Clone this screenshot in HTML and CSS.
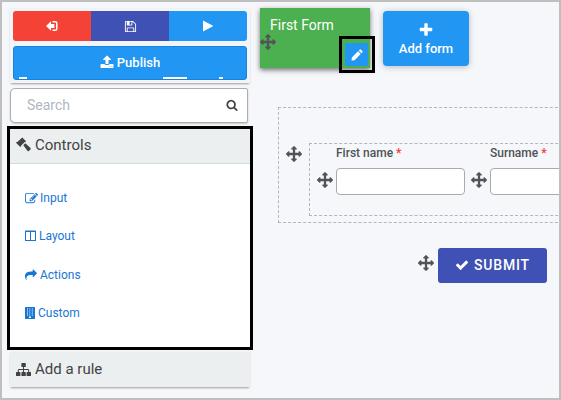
FILE: index.html
```
<!DOCTYPE html>
<html lang="en">
<head>
<meta charset="utf-8">
<title>Form editor</title>
<link rel="stylesheet" href="styles.css">
</head>
<body>
<svg class="defs" aria-hidden="true">
  <symbol id="move" viewBox="0 0 1792 1792"><path d="M1792 896q0 26-19 45l-256 256q-19 19-45 19t-45-19-19-45v-128h-384v384h128q26 0 45 19t19 45-19 45l-256 256q-19 19-45 19t-45-19l-256-256q-19-19-19-45t19-45 45-19h128v-384h-384v128q0 26-19 45t-45 19-45-19l-256-256q-19-19-19-45t19-45l256-256q19-19 45-19t45 19 19 45v128h384v-384h-128q-26 0-45-19t-19-45 19-45l256-256q19-19 45-19t45 19l256 256q19 19 19 45t-19 45-45 19h-128v384h384v-128q0-26 19-45t45-19 45 19l256 256q19 19 19 45z"/></symbol>
</svg>
<div class="frame">
  <aside class="sidebar">
    <div class="toolbar">
      <div class="actions">
        <button class="btn exit"><svg class="i12" viewBox="0 0 12 12"><path d="M0 6 5 1.200v2.800h3.400v4H5v2.800z"/><path d="M6.500 1.800h2.800q1.500 0 1.500 1.500v5.400q0 1.500-1.500 1.500H6.500" fill="none" stroke="currentColor" stroke-width="1.500"/></svg></button>
        <button class="btn save"><svg class="i13" viewBox="0 0 1792 1792"><path d="M512 1536h768v-384h-768v384zm896 0h128v-896q0-14-10-38.500t-20-34.500l-281-281q-10-10-34-20t-39-10v416q0 40-28 68t-68 28h-576q-40 0-68-28t-28-68v-416h-128v1280h128v-416q0-40 28-68t68-28h832q40 0 68 28t28 68v416zm-384-928v-320q0-13-9.500-22.500t-22.500-9.500h-192q-13 0-22.500 9.500t-9.500 22.500v320q0 13 9.500 22.500t22.500 9.500h192q13 0 22.500-9.500t9.500-22.500zm640 32v928q0 40-28 68t-68 28h-1344q-40 0-68-28t-28-68v-1344q0-40 28-68t68-28h928q40 0 88 20t76 48l280 280q28 28 48 76t20 88z"/></svg></button>
        <button class="btn play"><svg class="i12" viewBox="0 0 12 12"><path d="M1 .4v11.200L11.400 6z"/></svg></button>
      </div>
      <button class="btn publish"><svg class="i14" viewBox="0 0 1792 1792"><path d="M1344 1472q0-26-19-45t-45-19-45 19-19 45 19 45 45 19 45-19 19-45zm256 0q0-26-19-45t-45-19-45 19-19 45 19 45 45 19 45-19 19-45zm128-224v320q0 40-28 68t-68 28h-1472q-40 0-68-28t-28-68v-320q0-40 28-68t68-28h427q21 56 70.500 92t110.500 36h256q61 0 110.500-36t70.500-92h427q40 0 68 28t28 68zm-325-648q-17 40-59 40h-256v448q0 26-19 45t-45 19h-256q-26 0-45-19t-19-45v-448h-256q-42 0-59-40-17-39 14-69l448-448q18-19 45-19t45 19l448 448q31 30 14 69z"/></svg><span>Publish</span></button>
    </div>
    <div class="search"><span>Search</span><svg class="i12" viewBox="0 0 1792 1792"><path d="M1216 832q0-185-131.500-316.500t-316.500-131.500-316.500 131.500-131.500 316.500 131.500 316.500 316.500 131.500 316.500-131.500 131.500-316.500zm512 832q0 52-38 90t-90 38q-54 0-90-38l-343-342q-179 124-399 124-143 0-273.500-55.500t-225-150-150-225-55.500-273.500 55.500-273.500 150-225 225-150 273.500-55.500 273.500 55.500 225 150 150 225 55.500 273.500q0 220-124 399l343 343q37 37 37 90z"/></svg></div>
    <section class="controls">
      <h2 class="heading"><svg class="i15" viewBox="0 0 15 15"><path d="M6.200.4 10.100 4.300 9.300 5.100 8.800 5 5 8.800l.1.500-.8.800L0 5.800 0 5.600l.9-.7.500.2L5.400 1.200z"/><path d="m7.300 8.300 2-2 5 4.500q.8.800.1 1.600l-1.500 1.500q-.8.700-1.500-.1z"/></svg><span>Controls</span></h2>
      <nav class="links">
        <a class="link"><svg class="i13" viewBox="0 0 1792 1792"><path d="M888 1184l116-116-152-152-116 116v56h96v96h56zm440-720q-16-16-33 1l-350 350q-17 17-1 33t33-1l350-350q17-17 1-33zm80 594v190q0 119-84.500 203.500t-203.500 84.500h-832q-119 0-203.500-84.500t-84.500-203.500v-832q0-119 84.500-203.500t203.500-84.500h832q63 0 117 25 15 7 18 23 3 17-9 29l-49 49q-14 14-32 8-23-6-45-6h-832q-66 0-113 47t-47 113v832q0 66 47 113t113 47h832q66 0 113-47t47-113v-126q0-13 9-22l64-64q15-15 35-7t20 29zm-96-738l288 288-672 672h-288v-288zm444 132l-92 92-288-288 92-92q28-28 68-28t68 28l152 152q28 28 28 68t-28 68z"/></svg><span class="tight">Input</span></a>
        <a class="link"><svg class="cols" viewBox="0 0 11 12"><path fill-rule="evenodd" d="M.6.5h9.800q.6 0 .6.600v9.300q0 .600-.6.600H.6q-.6 0-.6-.6V1.100Q0 .5.600.5zM1 2v8h4V2zm5 0v8h4V2z"/></svg><span>Layout</span></a>
        <a class="link"><svg class="i12" viewBox="0 0 1792 1792"><path d="M1792 640q0 26-19 45l-512 512q-19 19-45 19t-45-19-19-45v-256h-224q-98 0-175.500 6t-154 21.500-133 42.500-105.500 69.500-80 101-48.500 138.500-17.500 181q0 55 5 123 0 6 2.500 23.500t2.500 26.500q0 15-8.500 25t-23.500 10q-16 0-28-17-7-9-13-22t-13.500-30-10.500-24q-127-285-127-451 0-199 53-333 162-403 875-403h224v-256q0-26 19-45t45-19 45 19l512 512q19 19 19 45z"/></svg><span>Actions</span></a>
        <a class="link"><svg class="building" viewBox="0 0 10 12"><path fill-rule="evenodd" d="M.5 0h9q.5 0 .5.500v11q0 .500-.5.500h-9q-.5 0-.5-.5V.5Q0 0 .5 0zM2 1.500v1h1v-1zm2.300 0v1h1v-1zm2.500 0v1h1v-1zM2 3.500v1h1v-1zm2.300 0v1h1v-1zm2.500 0v1h1v-1zM2 5.500v1h1v-1zm2.300 0v1h1v-1zm2.500 0v1h1v-1zM2 7.500v1h1v-1zm2.300 0v1h1v-1zm2.500 0v1h1v-1zM3.900 9.500V11h2V9.500z"/></svg><span>Custom</span></a>
      </nav>
    </section>
    <h2 class="heading rule"><svg class="i15" viewBox="0 0 15 15"><path d="M6 1h3.200q.6 0 .6.600v2.800q0 .600-.6.600H8v2h4q1.200 0 1.200 1.200V10h1.200q.6 0 .6.600v2.800q0 .600-.6.600h-3.200q-.6 0-.6-.6v-2.800q0-.600.6-.6h1V8H8v2h1.200q.6 0 .6.600v2.800q0 .600-.6.600H6q-.6 0-.6-.6v-2.800Q5.400 10 6 10h1V8H2.800v2h1q.6 0 .6.600v2.800q0 .600-.6.600H.6q-.6 0-.6-.6v-2.800Q0 10 .6 10h1.200V8.200Q1.800 7 3 7h4V5H6q-.6 0-.6-.6V1.600Q5.400 1 6 1z"/></svg><span>Add a rule</span></h2>
  </aside>
  <main class="main">
    <div class="tabs">
      <div class="tab">
        <span>First Form</span>
        <svg class="move tabmove"><use href="#move"/></svg>
        <div class="marker"><button class="edit"><svg class="i12" viewBox="0 0 12 12"><path d="M7 2.300 9.700 5 3.800 10.900q-.3.300-.7.300L.5 11.500.8 8.900q0-.4.300-.7zM7.700 1.600l.9-.9q.7-.7 1.400 0L11.300 2q.7.700 0 1.400l-.9.900z"/></svg></button></div>
      </div>
      <button class="add"><svg class="i16" viewBox="0 0 1792 1792"><path d="M1600 736v192q0 40-28 68t-68 28h-416v416q0 40-28 68t-68 28h-192q-40 0-68-28t-28-68v-416h-416q-40 0-68-28t-28-68v-192q0-40 28-68t68-28h416v-416q0-40 28-68t68-28h192q40 0 68 28t28 68v416h416q40 0 68 28t28 68z"/></svg><span>Add form</span></button>
    </div>
    <div class="panel">
      <svg class="move"><use href="#move"/></svg>
      <div class="fields">
        <svg class="move"><use href="#move"/></svg>
        <label class="field"><span class="label">First name <b>*</b></span><input class="input" type="text"></label>
        <svg class="move"><use href="#move"/></svg>
        <label class="field"><span class="label">Surname <b>*</b></span><input class="input" type="text"></label>
      </div>
    </div>
    <div class="submitrow">
      <svg class="move"><use href="#move"/></svg>
      <button class="submit"><svg class="i14" viewBox="0 0 1792 1792"><path d="M1671 566q0 40-28 68l-724 724-136 136q-28 28-68 28t-68-28l-136-136-362-362q-28-28-28-68t28-68l136-136q28-28 68-28t68 28l294 295 656-657q28-28 68-28t68 28l136 136q28 28 28 68z"/></svg><span>SUBMIT</span></button>
    </div>
  </main>
</div>
</body>
</html>
```
FILE: styles.css
```
* { box-sizing: border-box; }
body { margin: 0; font-family: Roboto, "Liberation Sans", sans-serif; color: #424242; }
svg { fill: currentColor; flex: none; display: block; }
button { border: 0; padding: 0; margin: 0; font: inherit; color: #fff; display: flex; align-items: center; justify-content: center; }
.defs { display: none; }
.frame { width: 561px; height: 400px; border: 2px solid #bfbfbf; background: #f5f7fb; display: flex; overflow: hidden; }
.i12 { width: 12px; height: 12px; }
.i13 { width: 13px; height: 13px; }
.i14 { width: 14px; height: 14px; }
.i15 { width: 15px; height: 15px; }
.i16 { width: 16px; height: 16px; }

.sidebar { width: 246px; margin-left: 5px; padding-top: 7px; flex: none; }
.toolbar { margin: 0 3px; height: 74px; padding: 2px 3px; background: #f2f4f7; box-shadow: 0 2px 2px -1px rgba(0, 0, 0, .35), 0 0 2px rgba(0, 0, 0, .08); }
.actions { display: flex; height: 30px; border-radius: 3px; overflow: hidden; }
.btn { flex: 1; background: #2196f3; }
.btn.exit { background: #f44336; }
.btn.save { background: #3f51b5; }
.btn.publish {
  width: 100%; height: 34px; margin-top: 5px; padding-bottom: 2px; gap: 3px; border: 1px solid #1684dc; border-radius: 3px;
  font-size: 13px; font-weight: 500;
  background:
    linear-gradient(#fff, #fff) 5px 30px / 8px 2px no-repeat,
    linear-gradient(#fff, #fff) 149px 30px / 24px 2px no-repeat,
    linear-gradient(#fff, #fff) 205px 30px / 4px 2px no-repeat,
    #2196f3;
}
.search {
  margin: 5px 5px 3px 3px; height: 35px; padding: 0 9px 2px 16px; background: #fff; border: 1px solid #adadad; border-radius: 5px 2px 2px 5px;
  box-shadow: 0 1px 2px rgba(0, 0, 0, .2); display: flex; align-items: center; justify-content: space-between; font-size: 14px;
}
.search span { color: #b0b7c3; }
.controls { height: 224px; border: 3px solid #000; background: #fff; }
.heading { margin: 0; height: 35px; padding: 0 6px 3px; display: flex; align-items: center; gap: 4px; background: #eceff0; border-bottom: 1px solid #cfdcdd; font-size: 15px; font-weight: 400; }
.rule { margin: 2px 3px 0; padding-bottom: 1px; border: 0; box-shadow: 0 2px 2px -1px rgba(0, 0, 0, .35), 0 0 2px rgba(0, 0, 0, .08); }
.links { padding: 15px 15px 0; }
.link { display: flex; align-items: center; height: 38.300px; gap: 3px; font-size: 12px; color: #1976d2; }
.tight { margin-left: -1px; }
.cols { width: 11px; height: 12px; }
.building { width: 10px; height: 12px; }

.main { width: 310px; flex: none; padding: 6px 0 0 5px; }
.move { width: 16px; height: 16px; color: #505357; }
.tabs { display: flex; padding-left: 2px; }
.tab { position: relative; width: 110px; height: 60px; padding: 8px 10px; background: #4caf50; color: #fff; font-size: 14px; line-height: 18px; box-shadow: 0 2px 5px rgba(0, 0, 0, .55); }
.tabmove { position: absolute; left: 0; top: 26px; }
.marker { position: absolute; left: 79px; top: 28px; width: 36px; height: 37px; border: 3px solid #000; padding: 4px 3px; }
.edit { width: 23px; height: 23px; background: #2196f3; border-radius: 2px; }
.add { width: 86px; height: 55px; margin: 3px 0 0 13px; padding-top: 2px; flex-direction: column; gap: 2px; border-radius: 4px; background: #2196f3; font-size: 13px; font-weight: 500; line-height: 18px; box-shadow: 0 1px 6px rgba(0, 0, 0, .25); }
.panel { width: 310px; height: 116px; margin: 39px 0 0 20px; padding: 35px 0 0 7px; border: 1px dashed #b4b6ba; display: flex; gap: 7px; }
.panel > .move { margin-top: 3px; }
.fields { width: 400px; flex: none; height: 73px; border: 1px dashed #b4b6ba; padding-left: 7px; display: flex; }
.fields .move { margin-top: 28px; }
.field { width: 129px; margin: 0 6px 0 3px; flex: none; }
.label { display: block; height: 24px; padding-top: 2px; font-size: 12px; font-weight: 500; line-height: 15px; color: #505357; }
.label b { color: #f44336; }
.input { display: block; width: 129px; height: 27px; border: 1px solid #aaa; border-radius: 4px; background: #fff; }
.submitrow { display: flex; gap: 4px; margin: 25px 0 0 160px; }
.submitrow .move { margin-top: 7px; }
.submit { width: 109px; height: 35px; gap: 5px; padding-bottom: 1px; background: #3f51b5; border-radius: 3px; font-size: 14px; font-weight: 500; letter-spacing: .8px; }
```
